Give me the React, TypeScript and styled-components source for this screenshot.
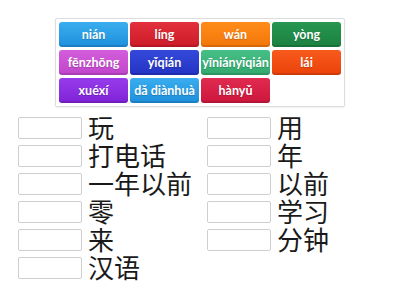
import React from 'react';
import styled, { createGlobalStyle } from 'styled-components';

const GlobalStyle = createGlobalStyle`
  html, body {
    margin: 0;
    padding: 0;
    background: #ffffff;
  }
`;

const Page = styled.div`
  width: 400px;
  height: 300px;
  padding-top: 18px;
  box-sizing: border-box;
  overflow: hidden;
`;

const Bank = styled.div`
  width: 290px;
  margin: 0 auto;
  box-sizing: border-box;
  padding: 3px;
  border: 1px solid #dcdcdc;
  border-radius: 2px;
  box-shadow: 0 1px 2px rgba(0, 0, 0, 0.06);
  display: grid;
  grid-template-columns: repeat(4, 1fr);
  gap: 3px 2px;
`;

const Tile = styled.div<{ $color: string; $top: string }>`
  height: 25px;
  border-radius: 3px;
  background: linear-gradient(${(p) => p.$top}, ${(p) => p.$color});
  box-shadow: inset 0 -2px 0 rgba(0, 0, 0, 0.12);
  color: #ffffff;
  font-family: Lato, 'Open Sans', sans-serif;
  font-weight: 700;
  font-size: 12.5px;
  display: flex;
  align-items: center;
  justify-content: center;
  white-space: nowrap;
  text-shadow: 0 1px 1px rgba(0, 0, 0, 0.2);
`;

const Answers = styled.div`
  display: flex;
  padding: 10px 0 0 18px;
`;

const Column = styled.div`
  width: 189px;
  display: flex;
  flex-direction: column;
`;

const Row = styled.div`
  height: 28px;
  display: flex;
  align-items: flex-start;
`;

const Slot = styled.div`
  width: 64px;
  height: 22px;
  box-sizing: border-box;
  border: 1px solid #cfcfcf;
  border-radius: 2px;
  background: #ffffff;
  flex-shrink: 0;
`;

const Word = styled.span`
  margin-left: 6px;
  font-family: 'Noto Sans CJK SC', sans-serif;
  font-size: 26px;
  line-height: 19px;
  height: 19px;
  color: #1a1a1a;
  white-space: nowrap;
`;

const tiles = [
  { text: 'nián', top: '#3aaeef', color: '#1d8fdc' },
  { text: 'líng', top: '#e2303c', color: '#cc1a28' },
  { text: 'wán', top: '#ff8c1a', color: '#f2760a' },
  { text: 'yòng', top: '#279752', color: '#1b803f' },
  { text: 'fēnzhōng', top: '#d35ddb', color: '#c045cb' },
  { text: 'yǐqián', top: '#3449da', color: '#2434c4' },
  { text: 'yīniányǐqián', top: '#46bf86', color: '#33a86f' },
  { text: 'lái', top: '#f85a1c', color: '#ea420a' },
  { text: 'xuéxí', top: '#973ceb', color: '#7f22d8' },
  { text: 'dǎ diànhuà', top: '#3aaeef', color: '#1d8fdc' },
  { text: 'hànyǔ', top: '#e02a50', color: '#cc163c' },
];

const left = ['玩', '打电话', '一年以前', '零', '来', '汉语'];
const right = ['用', '年', '以前', '学习', '分钟'];

export default function App() {
  return (
    <Page>
      <GlobalStyle />
      <Bank>
        {tiles.map((t) => (
          <Tile key={t.text} $color={t.color} $top={t.top}>
            {t.text}
          </Tile>
        ))}
      </Bank>
      <Answers>
        <Column>
          {left.map((w) => (
            <Row key={w}>
              <Slot />
              <Word>{w}</Word>
            </Row>
          ))}
        </Column>
        <Column>
          {right.map((w) => (
            <Row key={w}>
              <Slot />
              <Word>{w}</Word>
            </Row>
          ))}
        </Column>
      </Answers>
    </Page>
  );
}
